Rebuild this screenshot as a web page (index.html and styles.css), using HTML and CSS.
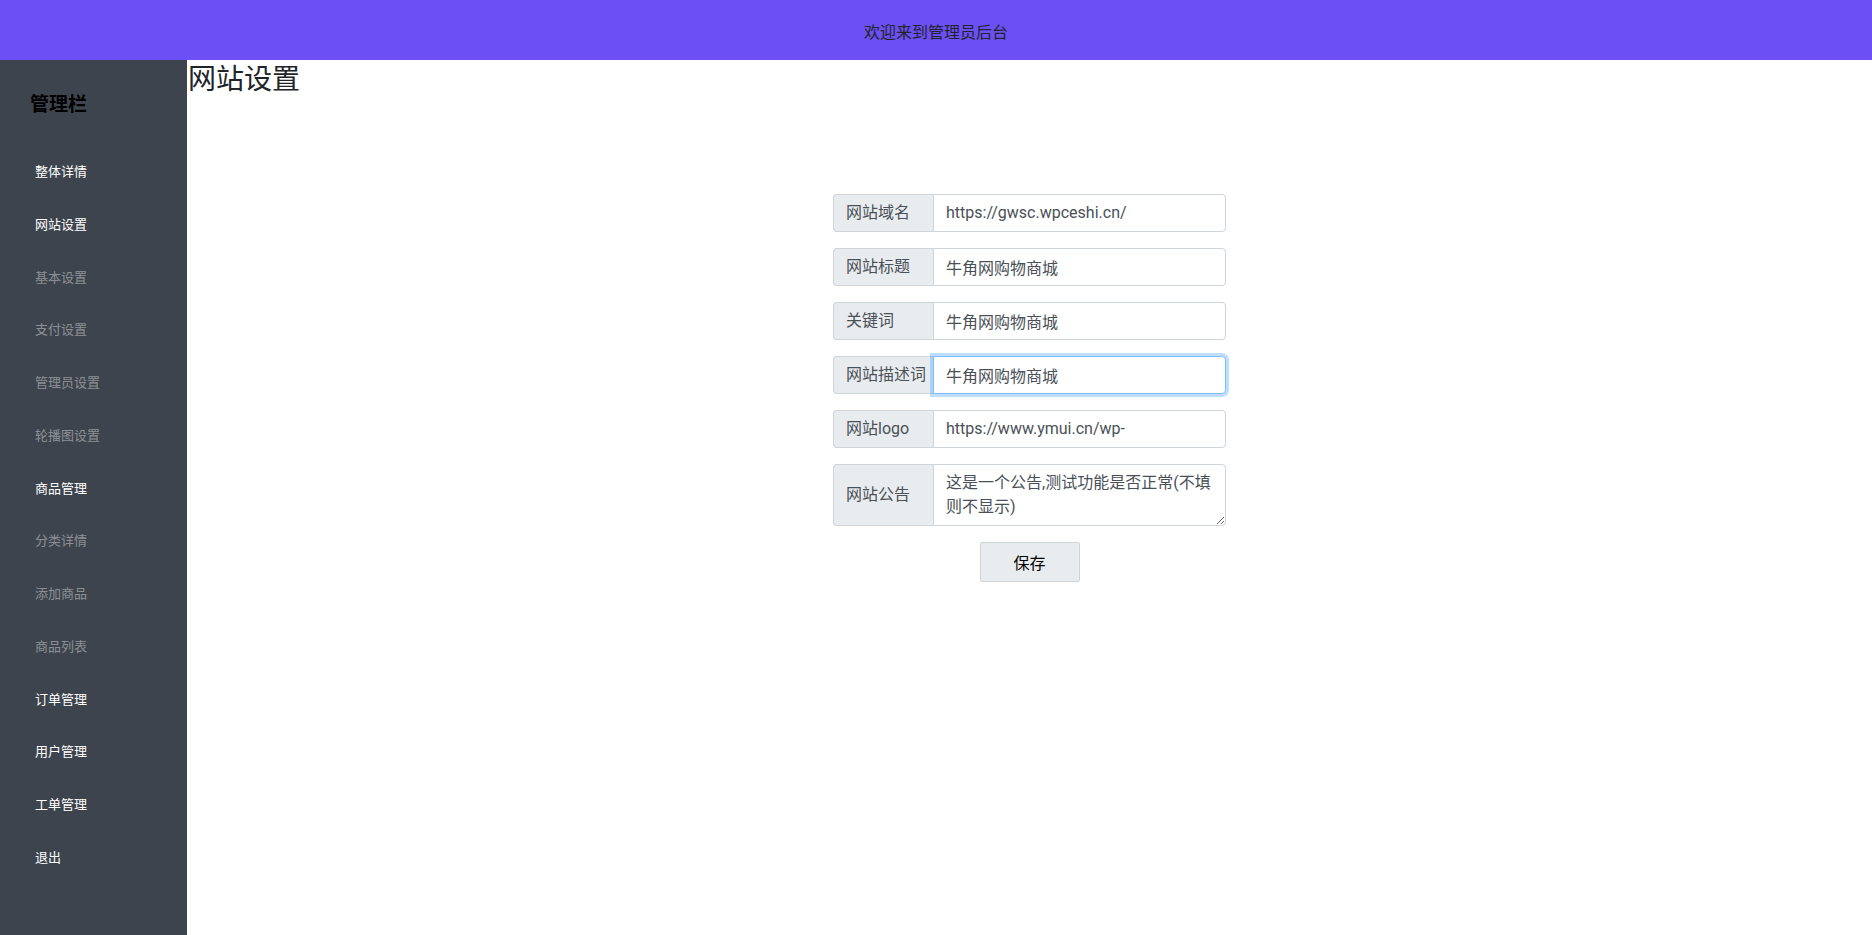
FILE: index.html
```html
<!DOCTYPE html>
<html lang="zh-CN">
<head>
<meta charset="utf-8">
<title>管理员后台</title>
<link rel="stylesheet" href="styles.css">
</head>
<body>
<header class="topbar">欢迎来到管理员后台</header>
<div class="layout">
  <aside class="sidebar">
    <h5 class="side-title">管理栏</h5>
    <nav class="side-nav">
      <a class="nav-link main">整体详情</a>
      <a class="nav-link main">网站设置</a>
      <a class="nav-link sub">基本设置</a>
      <a class="nav-link sub">支付设置</a>
      <a class="nav-link sub">管理员设置</a>
      <a class="nav-link sub">轮播图设置</a>
      <a class="nav-link main">商品管理</a>
      <a class="nav-link sub">分类详情</a>
      <a class="nav-link sub">添加商品</a>
      <a class="nav-link sub">商品列表</a>
      <a class="nav-link main">订单管理</a>
      <a class="nav-link main">用户管理</a>
      <a class="nav-link main">工单管理</a>
      <a class="nav-link main">退出</a>
    </nav>
  </aside>
  <main class="content">
    <h3 class="page-title">网站设置</h3>
    <form class="settings-form">
      <div class="input-group">
        <span class="group-label">网站域名</span>
        <input class="form-control" type="text" value="https://gwsc.wpceshi.cn/">
      </div>
      <div class="input-group">
        <span class="group-label">网站标题</span>
        <input class="form-control" type="text" value="牛角网购物商城">
      </div>
      <div class="input-group">
        <span class="group-label">关键词</span>
        <input class="form-control" type="text" value="牛角网购物商城">
      </div>
      <div class="input-group">
        <span class="group-label">网站描述词</span>
        <input class="form-control focused" type="text" value="牛角网购物商城">
      </div>
      <div class="input-group">
        <span class="group-label">网站logo</span>
        <input class="form-control" type="text" value="https://www.ymui.cn/wp-">
      </div>
      <div class="input-group">
        <span class="group-label">网站公告</span>
        <textarea class="form-control area" rows="2">这是一个公告,测试功能是否正常(不填则不显示)</textarea>
      </div>
      <div class="actions">
        <button type="button" class="btn-save">保存</button>
      </div>
    </form>
  </main>
</div>
</body>
</html>
```
FILE: styles.css
```css
* { box-sizing: border-box; }
html, body { margin: 0; padding: 0; height: 100%; }
body {
  font-family: "Segoe UI", Roboto, "Noto Sans CJK SC", sans-serif;
  font-size: 16px;
  color: #212529;
  background: #fff;
}
.topbar {
  height: 60px;
  background: #6c4ff5;
  color: #212529;
  display: flex;
  align-items: center;
  justify-content: center;
  font-size: 16px;
  padding-top: 2px;
}
.layout {
  display: flex;
  height: calc(100% - 60px);
}
.sidebar {
  width: 187px;
  flex: none;
  background: #3d444d;
  padding: 33px 0 0 30px;
}
.side-title {
  margin: 0 0 29px 0;
  font-size: 19px;
  line-height: 24px;
  font-weight: 700;
  color: #000;
}
.side-nav {
  display: flex;
  flex-direction: column;
}
.nav-link {
  display: block;
  font-size: 13px;
  line-height: 20.75px;
  padding: 16px 0 16px 5px;
  text-decoration: none;
  cursor: pointer;
}
.nav-link.main { color: #fff; }
.nav-link.sub { color: rgba(255,255,255,0.42); }
.content {
  flex: 1;
}
.page-title {
  margin: 3px 0 0 1px;
  font-size: 28px;
  line-height: 33.6px;
  font-weight: 400;
  color: #212529;
}
.settings-form {
  width: 393px;
  margin: 97px auto 0;
}
.input-group {
  display: flex;
  margin-bottom: 16px;
}
.group-label {
  width: 100px;
  flex: none;
  display: flex;
  align-items: center;
  padding: 6px 12px;
  font-size: 16px;
  line-height: 24px;
  color: #495057;
  background: #e9ecef;
  border: 1px solid #ced4da;
  border-right: 0;
  border-radius: 4px 0 0 4px;
  white-space: nowrap;
}
.form-control {
  flex: 1;
  min-width: 0;
  height: 38px;
  padding: 6px 12px;
  font-family: inherit;
  font-size: 16px;
  line-height: 24px;
  color: #495057;
  background: #fff;
  border: 1px solid #ced4da;
  border-radius: 0 4px 4px 0;
  outline: none;
}
.form-control.focused {
  border-color: #80bdff;
  box-shadow: 0 0 0 3px rgba(0,123,255,0.25);
  position: relative;
}
.form-control.area {
  height: 62px;
  resize: vertical;
  display: block;
}
.actions {
  display: flex;
  justify-content: center;
}
.btn-save {
  width: 100px;
  height: 40px;
  font-family: inherit;
  font-size: 16px;
  color: #000;
  background: #e9ecef;
  border: 1px solid #ced4da;
  border-radius: 2px;
  cursor: pointer;
}
```
